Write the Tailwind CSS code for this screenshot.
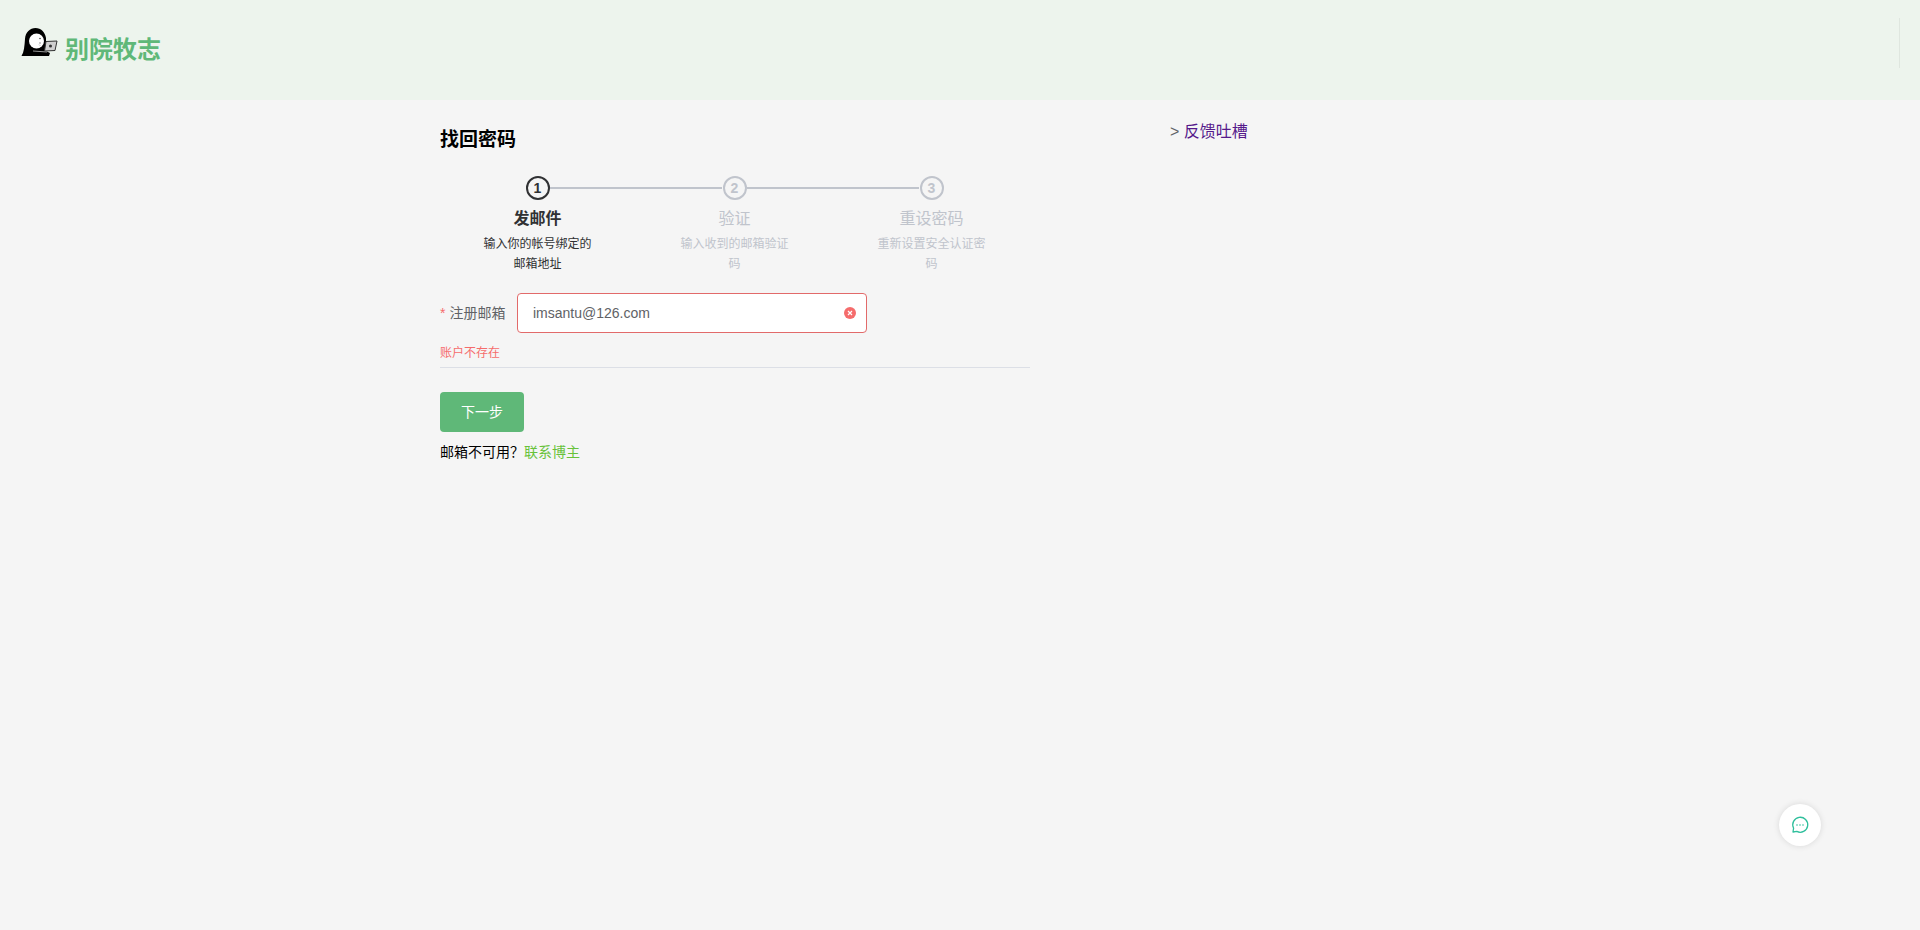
<!DOCTYPE html>
<html lang="zh-CN">
<head>
  <meta charset="UTF-8">
  <title>找回密码 - 别院牧志</title>
  <script src="https://cdn.jsdelivr.net/npm/@tailwindcss/browser@4"></script>
</head>
<body class="relative h-[930px] overflow-hidden bg-[#f5f5f5] font-['Liberation_Sans','Noto_Sans_CJK_SC',sans-serif]">

  <header class="h-[100px] bg-[#edf4ed] flex items-center relative">
    <!-- logo: hooded figure with laptop -->
    <svg class="ml-[20px] mb-[15px] w-[38px] h-[30px]" viewBox="0 0 38 30">
      <path d="M1.5 28 C4 24 4.5 18 5 11 C5.5 4 10 0 15.5 0 C21 0 25 4 26 10 L26 23 L30 25 L29 28 Z" fill="#000"/>
      <ellipse cx="16.5" cy="13" rx="7.5" ry="7.5" fill="#fff"/>
      <circle cx="20" cy="10.5" r="0.8" fill="#444"/>
      <circle cx="20" cy="15" r="0.8" fill="#888"/>
      <path d="M19 16.5 L20.5 18" stroke="#999" stroke-width="0.6"/>
      <path d="M26 13.5 L37 13 L35 22.5 L24.5 23 Z" fill="#cfcfcf" stroke="#333" stroke-width="1"/>
      <circle cx="30.5" cy="18" r="1.5" fill="#333"/>
      <path d="M13 23 L27 24" stroke="#999" stroke-width="1"/>
    </svg>
    <span class="ml-[7px] text-[24px] leading-none font-bold text-[#5fb878]">别院牧志</span>
    <div class="absolute left-[1899px] top-[18px] w-px h-[50px] bg-[#dfe6df]"></div>
  </header>

  <main class="flex pl-[440px] pt-[29px]">
    <section class="w-[590px] shrink-0">
      <h1 class="text-[19px] leading-[22px] font-bold text-black">找回密码</h1>

      <ol class="flex mt-[25px] ml-[-1px] w-[591px]">
        <li class="relative w-[197px] flex flex-col items-center text-center">
          <div class="absolute left-[111px] top-[11px] w-[172px] h-[2px] bg-[#c0c4cc]"></div>
          <div class="w-[24px] h-[24px] rounded-full border-2 border-[#303133] flex items-center justify-center text-[14px] font-bold text-[#303133]">1</div>
          <div class="mt-[7px] text-[16px] leading-[24px] font-bold text-[#303133]">发邮件</div>
          <div class="mt-[3px] w-[112px] text-[12px] leading-[20px] text-[#303133]">输入你的帐号绑定的邮箱地址</div>
        </li>
        <li class="relative w-[197px] flex flex-col items-center text-center">
          <div class="absolute left-[111px] top-[11px] w-[172px] h-[2px] bg-[#c0c4cc]"></div>
          <div class="w-[24px] h-[24px] rounded-full border-2 border-[#c0c4cc] flex items-center justify-center text-[14px] font-bold text-[#c0c4cc]">2</div>
          <div class="mt-[7px] text-[16px] leading-[24px] text-[#c0c4cc]">验证</div>
          <div class="mt-[3px] w-[112px] text-[12px] leading-[20px] text-[#c0c4cc]">输入收到的邮箱验证码</div>
        </li>
        <li class="w-[197px] flex flex-col items-center text-center">
          <div class="w-[24px] h-[24px] rounded-full border-2 border-[#c0c4cc] flex items-center justify-center text-[14px] font-bold text-[#c0c4cc]">3</div>
          <div class="mt-[7px] text-[16px] leading-[24px] text-[#c0c4cc]">重设密码</div>
          <div class="mt-[3px] w-[112px] text-[12px] leading-[20px] text-[#c0c4cc]">重新设置安全认证密码</div>
        </li>
      </ol>

      <form class="mt-[19px]">
        <div class="flex items-center">
          <label class="w-[77px] text-[14px] leading-[40px] text-[#606266]"><span class="text-[#f56c6c] mr-[4px]">*</span>注册邮箱</label>
          <div class="relative w-[350px] h-[40px] rounded-[4px] border border-[#e26a6a] bg-white flex items-center pl-[15px] pr-[30px]">
            <span class="text-[14px] text-[#606266]">imsantu@126.com</span>
            <svg class="absolute right-[10px] top-[13px] w-[12px] h-[12px]" viewBox="0 0 12 12">
              <circle cx="6" cy="6" r="6" fill="#f56c6c"/>
              <path d="M4 4 L8 8 M8 4 L4 8" stroke="#fff" stroke-width="1.2"/>
            </svg>
          </div>
        </div>
        <div class="mt-[12px] text-[12px] leading-[16px] text-[#f56c6c]">账户不存在</div>
        <div class="mt-[6px] h-px bg-[#dcdfe6]"></div>
        <button type="button" class="block mt-[24px] w-[84px] h-[40px] rounded-[4px] bg-[#5fb878] text-white text-[14px]">下一步</button>
        <p class="mt-[10px] text-[14px] leading-[20px] text-black">邮箱不可用？<span class="text-[#67c23a]">联系博主</span></p>
      </form>
    </section>

    <aside class="ml-[140px] mt-[-9px] text-[16px] leading-[24px] text-[#606266]">&gt; <a class="text-[#551a8b]">反馈吐槽</a></aside>
  </main>

  <!-- chat button -->
  <button class="absolute left-[1779px] top-[804px] w-[42px] h-[42px] rounded-full bg-white shadow-[0_0_6px_rgba(0,0,0,0.12)] flex items-center justify-center">
    <svg class="w-[18px] h-[18px]" viewBox="0 0 18 18" fill="none">
      <path d="M2 16 L2.6 12.2 A7.5 7.5 0 1 1 5.8 15.4 Z" stroke="#2fbf9c" stroke-width="1.3" stroke-linejoin="round"/>
      <circle cx="6" cy="9" r="0.8" fill="#2fbf9c"/>
      <circle cx="9" cy="9" r="0.8" fill="#2fbf9c"/>
      <circle cx="12" cy="9" r="0.8" fill="#2fbf9c"/>
    </svg>
  </button>

</body>
</html>
